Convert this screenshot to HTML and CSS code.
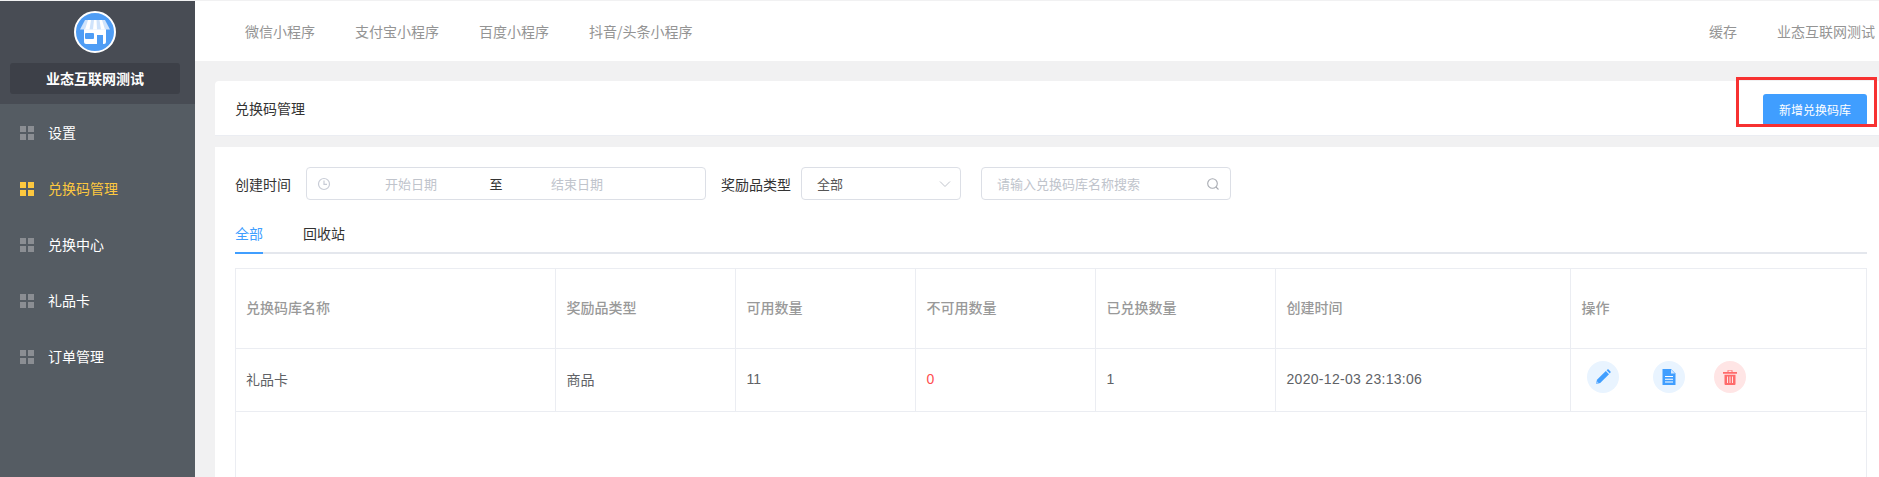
FILE: index.html
```html
<!DOCTYPE html>
<html lang="zh-CN">

<head>
    <meta charset="UTF-8">
    <meta name="viewport" content="width=device-width, initial-scale=1.0">
    <title>兑换码管理</title>
    <link rel="stylesheet" href="styles.css">
</head>

<body>
    <div class="app">
        <aside class="sidebar">
            <div class="brand">
                <svg class="avatar" viewBox="0 0 42 42">
                    <circle cx="21" cy="21" r="20" fill="#4f9df5" stroke="#fff" stroke-width="2"/>
                    <path d="M10 18h22v13a2 2 0 0 1-2 2H12a2 2 0 0 1-2-2z" fill="#fff"/>
                    <path d="M11 9h20l5 9.500H6z" fill="#cfe3fb"/>
                    <path d="M14 9h3l-1.500 9.500H11zM20 9h2.500l.5 9.500h-4zM25.500 9h2.500l3 9.500h-4z" fill="#fff"/>
                    <rect x="11" y="22" width="9" height="6" rx="1" fill="#4f9df5"/>
                    <rect x="23" y="24" width="6" height="9" fill="#4f9df5"/>
                </svg>
                <div class="brand-name">业态互联网测试</div>
            </div>
            <nav class="menu">
                <a class="menu-item"><span class="dots"><i></i><i></i><i></i><i></i></span>设置</a>
                <a class="menu-item active"><span class="dots"><i></i><i></i><i></i><i></i></span>兑换码管理</a>
                <a class="menu-item"><span class="dots"><i></i><i></i><i></i><i></i></span>兑换中心</a>
                <a class="menu-item"><span class="dots"><i></i><i></i><i></i><i></i></span>礼品卡</a>
                <a class="menu-item"><span class="dots"><i></i><i></i><i></i><i></i></span>订单管理</a>
            </nav>
        </aside>

        <main class="main">
            <header class="topbar">
                <div class="topbar-links">
                    <a>微信小程序</a>
                    <a>支付宝小程序</a>
                    <a>百度小程序</a>
                    <a>抖音/头条小程序</a>
                </div>
                <div class="topbar-user">
                    <a>缓存</a>
                    <a>业态互联网测试</a>
                </div>
            </header>

            <section class="card page-head">
                <span>兑换码管理</span>
                <button class="button">新增兑换码库</button>
                <div class="red-mark"></div>
            </section>

            <section class="card content">
                <div class="filters">
                    <label>创建时间</label>
                    <div class="field date-field">
                        <svg class="clock" viewBox="0 0 14 14">
                            <circle cx="7" cy="7" r="5.500" fill="none" stroke="#c8ccd6" stroke-width="1.200"/>
                            <path d="M7 3.500V7.300H10" fill="none" stroke="#c8ccd6" stroke-width="1.200"/>
                        </svg>
                        <span class="date-input">开始日期</span>
                        <span class="date-sep">至</span>
                        <span class="date-input">结束日期</span>
                    </div>
                    <label class="type-label">奖励品类型</label>
                    <div class="field select-field">
                        <span>全部</span>
                        <svg class="chevron" viewBox="0 0 12 12">
                            <path d="M1 3.500L6 8.500L11 3.500" fill="none" stroke="#c0c4cc" stroke-width="1"/>
                        </svg>
                    </div>
                    <div class="field search-field">
                        <span class="placeholder">请输入兑换码库名称搜索</span>
                        <svg class="search" viewBox="0 0 14 14">
                            <circle cx="6.500" cy="6.500" r="4.800" fill="none" stroke="#a8abb2" stroke-width="1.100"/>
                            <path d="M10 10L12.500 12.500" stroke="#a8abb2" stroke-width="1.100"/>
                        </svg>
                    </div>
                </div>

                <div class="tabs">
                    <a class="tab active">全部</a>
                    <a class="tab">回收站</a>
                </div>

                <div class="table-wrap">
                    <table>
                        <colgroup>
                            <col class="col-name">
                            <col class="col-type">
                            <col class="col-num">
                            <col class="col-num">
                            <col class="col-num">
                            <col class="col-time">
                            <col>
                        </colgroup>
                        <thead>
                            <tr>
                                <th>兑换码库名称</th>
                                <th>奖励品类型</th>
                                <th>可用数量</th>
                                <th>不可用数量</th>
                                <th>已兑换数量</th>
                                <th>创建时间</th>
                                <th>操作</th>
                            </tr>
                        </thead>
                        <tbody>
                            <tr>
                                <td>礼品卡</td>
                                <td>商品</td>
                                <td>11</td>
                                <td class="danger">0</td>
                                <td>1</td>
                                <td class="datetime">2020-12-03 23:13:06</td>
                                <td>
                                    <div class="actions">
                                        <span class="action edit">
                                            <svg viewBox="0 0 16 16">
                                                <path d="M1 15L2 10.800L10.800 2L14 5.200L5.200 14z" fill="#409eff"/>
                                                <path d="M11.600 1.200L12.400.500Q13 0 13.600.500L15.500 2.400Q16 3 15.500 3.600L14.800 4.400z" fill="#409eff"/>
                                                <path d="M1 15L1.700 12.100L3.900 14.300z" fill="#9ccbff"/>
                                            </svg>
                                        </span>
                                        <span class="action doc">
                                            <svg viewBox="0 0 16 16">
                                                <path d="M1.500 0H10L14.500 4.500V16H1.500z" fill="#409eff"/>
                                                <path d="M10 0.500V4.500H14z" fill="#d5e9ff"/>
                                                <path d="M4 7.500H12M4 10.300H12M4 13H12" stroke="#fff" stroke-width="1.100"/>
                                            </svg>
                                        </span>
                                        <span class="action trash">
                                            <svg viewBox="0 0 16 16">
                                                <path d="M1 3H15V4.800H1zM5.500 3V1.200H10.500V3" fill="#ff6b6b"/>
                                                <path d="M6.500 1.700H9.500V3H6.500z" fill="#ffe5e5"/>
                                                <path d="M2.500 5.800H13.500V15A1 1 0 0 1 12.500 16H3.500A1 1 0 0 1 2.500 15z" fill="#ff6b6b"/>
                                                <path d="M5.500 7.500V14M8 7.500V14M10.500 7.500V14" stroke="#ffe5e5" stroke-width="1"/>
                                            </svg>
                                        </span>
                                    </div>
                                </td>
                            </tr>
                        </tbody>
                    </table>
                </div>
            </section>
        </main>
    </div>
</body>

</html>
```

FILE: styles.css
```css
* {
    box-sizing: border-box;
}

html,
body {
    height: 100%;
    margin: 0;
    overflow: hidden;
}

body {
    font-family: "Liberation Sans", "Noto Sans CJK SC", sans-serif;
    font-size: 14px;
    color: #333;
    background-color: #f1f1f2;
    padding-top: 1px;
}

.app {
    display: flex;
    height: 476px;
}

/* sidebar */
.sidebar {
    width: 195px;
    flex-shrink: 0;
    background-color: #555c63;
}

.brand {
    height: 103px;
    padding: 10px 15px 0 10px;
    background-color: #484c54;
    text-align: center;
}

.avatar {
    display: block;
    width: 42px;
    height: 42px;
    margin: 0 auto 10px;
}

.brand-name {
    height: 31px;
    line-height: 32px;
    border-radius: 3px;
    background-color: #3d4048;
    color: #fff;
    font-weight: 700;
    font-size: 14px;
}

.menu {
    padding-top: 1px;
}

.menu-item {
    display: flex;
    align-items: center;
    height: 56px;
    padding-left: 20px;
    padding-bottom: 2px;
    color: #fff;
}

.dots {
    display: grid;
    grid-template-columns: 6px 6px;
    grid-auto-rows: 6px;
    gap: 2px;
    margin-top: 2px;
    margin-right: 14px;
}

.dots i {
    background-color: #8b8e93;
}

.menu-item.active {
    color: #fdc83f;
}

.menu-item.active .dots i {
    background-color: #fdc83f;
}

/* main column */
.main {
    flex: 1;
    min-width: 0;
}

.topbar {
    display: flex;
    justify-content: space-between;
    align-items: center;
    height: 60px;
    padding: 0 4px 0 50px;
    background-color: #fff;
    color: #949494;
    font-family: "Noto Sans CJK SC", sans-serif;
}

.topbar-links,
.topbar-user {
    display: flex;
    gap: 40px;
}

.card {
    margin-left: 20px;
    background-color: #fff;
}

.page-head {
    position: relative;
    display: flex;
    justify-content: space-between;
    align-items: center;
    height: 55px;
    margin-top: 20px;
    padding: 0 12px 0 20px;
    border-bottom: 1px solid #ebedf2;
    border-radius: 4px 0 0 0;
}

.button {
    width: 104px;
    height: 32px;
    margin-top: 3px;
    border: none;
    border-radius: 3px;
    background-color: #409eff;
    color: #fff;
    font-family: inherit;
    font-size: 12px;
}

.red-mark {
    position: absolute;
    top: -4px;
    right: 2px;
    width: 141px;
    height: 50px;
    border: 3px solid #f73131;
}

.content {
    height: 330px;
    margin-top: 11px;
    padding: 20px 12px 0 20px;
}

/* filters */
.filters {
    display: flex;
    align-items: center;
    height: 33px;
}

.field {
    display: flex;
    align-items: center;
    height: 33px;
    border: 1px solid #dcdfe6;
    border-radius: 4px;
    font-size: 13px;
}

.date-field {
    width: 400px;
    margin-left: 15px;
    padding-left: 10px;
}

.clock {
    width: 14px;
    height: 14px;
    margin-right: 7px;
}

.date-input {
    width: 146px;
    text-align: center;
    color: #c0c4cc;
}

.date-sep {
    width: 20px;
    padding-left: 4px;
    text-align: center;
    color: #333;
}

.type-label {
    margin-left: 15px;
}

.select-field {
    justify-content: space-between;
    width: 160px;
    margin-left: 10px;
    padding: 0 9px 0 15px;
    color: #555;
}

.chevron {
    width: 12px;
    height: 12px;
}

.search-field {
    justify-content: space-between;
    width: 250px;
    margin-left: 20px;
    padding: 0 10px 0 15px;
}

.placeholder {
    color: #c0c4cc;
}

.search {
    width: 14px;
    height: 14px;
}

/* tabs */
.tabs {
    display: flex;
    gap: 40px;
    height: 37px;
    margin-top: 17px;
    border-bottom: 2px solid #e4e7ed;
}

.tab {
    height: 37px;
    line-height: 35px;
}

.tab.active {
    color: #409eff;
    border-bottom: 2px solid #409eff;
}

/* table */
.table-wrap {
    height: 230px;
    margin-top: 14px;
    border: 1px solid #ebedf2;
    border-bottom: none;
}

table {
    width: 100%;
    table-layout: fixed;
    border-collapse: collapse;
}

.col-name {
    width: 319px;
}

.col-type {
    width: 180px;
}

.col-num {
    width: 180px;
}

.col-time {
    width: 295px;
}

th,
td {
    padding: 0 10px 2px 11px;
    border-left: 1px solid #ebedf2;
    border-bottom: 1px solid #ebedf2;
    text-align: left;
}

th:first-child,
td:first-child {
    padding-left: 10px;
    border-left: none;
}

th {
    height: 79px;
    color: #999;
    font-weight: 500;
}

td {
    height: 63px;
    color: #606266;
}

.danger {
    color: #ff4d4f;
}

.datetime {
    letter-spacing: .3px;
}

.actions {
    display: flex;
    padding-left: 5px;
    margin-top: -3px;
}

.action {
    display: flex;
    align-items: center;
    justify-content: center;
    width: 32px;
    height: 32px;
    border-radius: 50%;
    background-color: #e9f4ff;
}

.action svg {
    width: 16px;
    height: 16px;
}

.edit {
    margin-right: 34px;
}

.doc {
    margin-right: 29px;
}

.trash {
    background-color: #ffe5e5;
}
```
